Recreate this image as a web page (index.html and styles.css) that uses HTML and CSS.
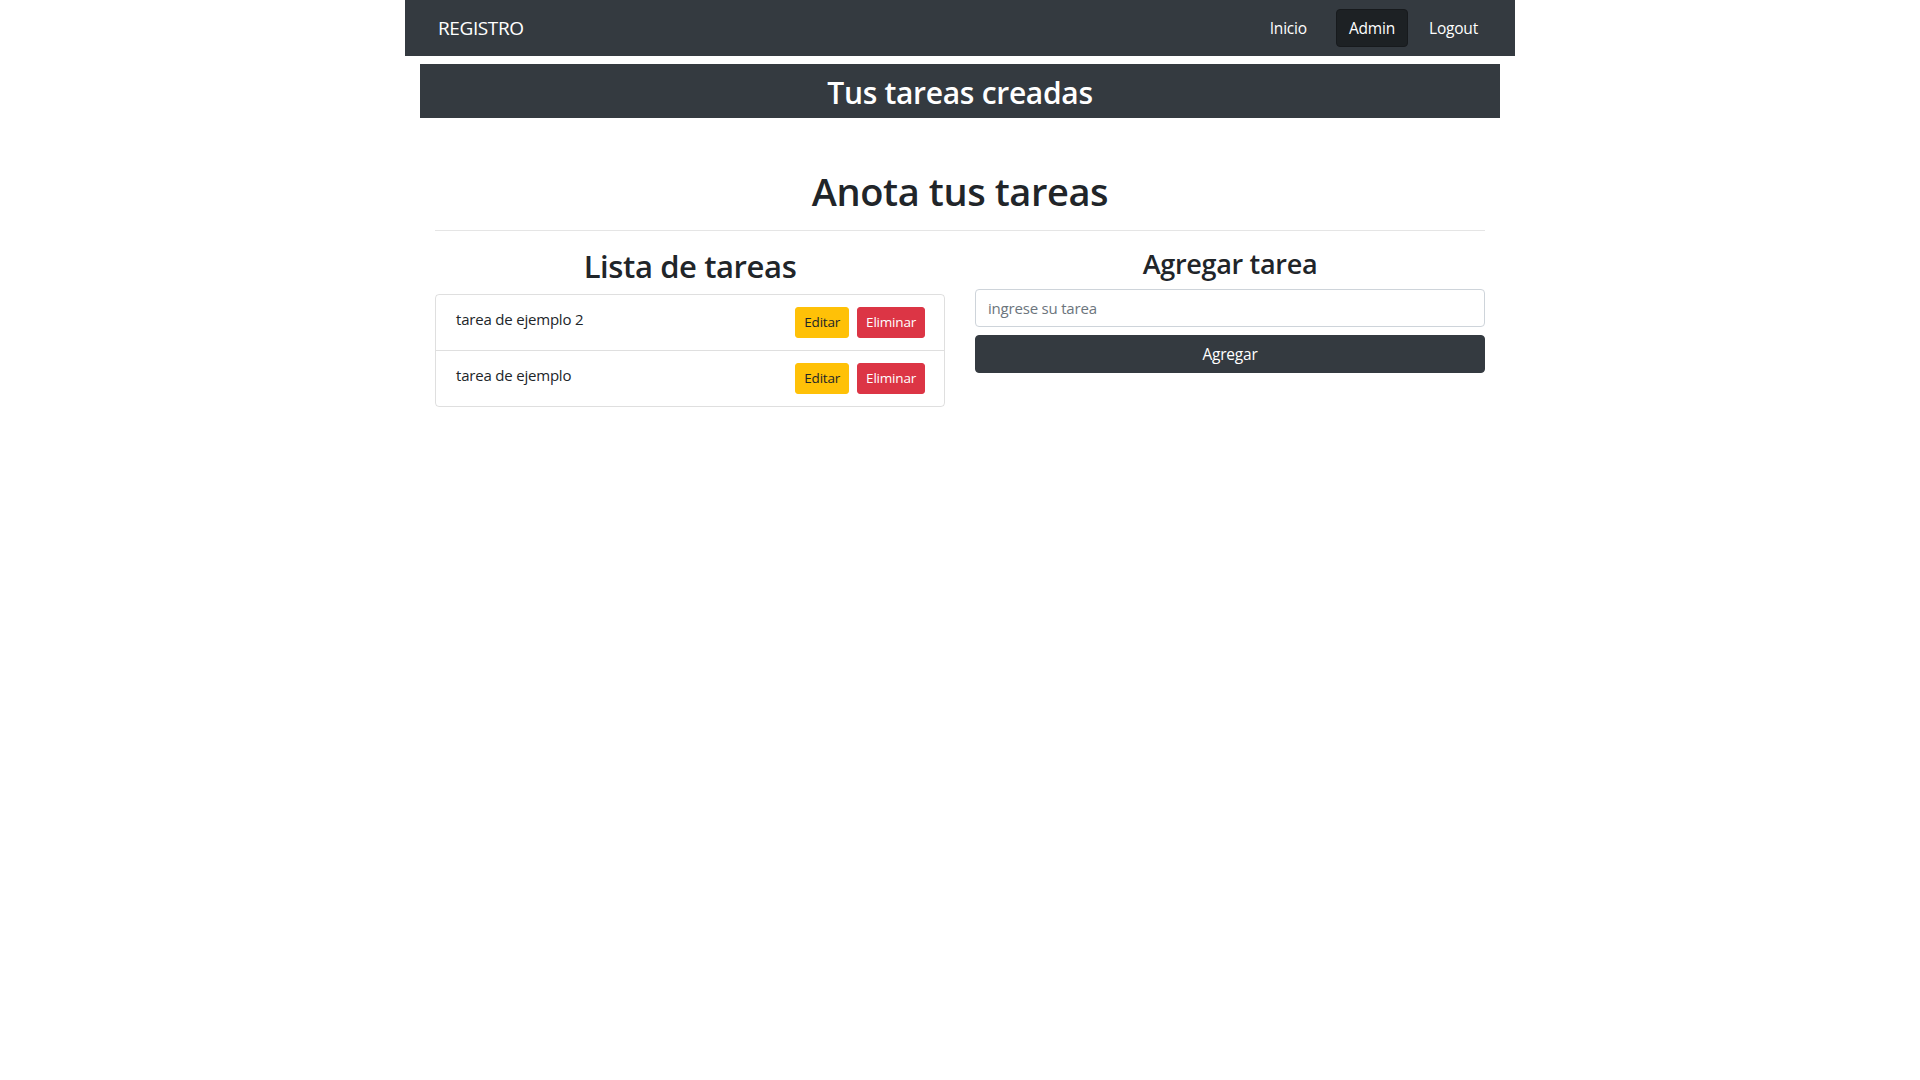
FILE: index.html
```html
<!DOCTYPE html>
<html lang="es">
<head>
<meta charset="utf-8">
<title>Tareas</title>
<link rel="stylesheet" href="styles.css">
</head>
<body>
<div class="page">
  <nav class="navbar">
    <a class="brand" href="#">REGISTRO</a>
    <div class="nav-links">
      <a class="nav-btn nav-inicio" href="#">Inicio</a>
      <a class="nav-btn nav-admin active" href="#">Admin</a>
      <a class="nav-btn nav-logout" href="#">Logout</a>
    </div>
  </nav>
  <div class="inner">
    <div class="banner"><h2 class="banner-title">Tus tareas creadas</h2></div>
    <div class="content">
      <h1 class="main-title">Anota tus tareas</h1>
      <hr class="divider">
      <div class="row">
        <div class="col">
          <h2 class="col-title-lg">Lista de tareas</h2>
          <ul class="list">
            <li class="list-item">
              <span class="task">tarea de ejemplo 2</span>
              <div class="actions">
                <button class="btn-sm btn-warning">Editar</button>
                <button class="btn-sm btn-danger">Eliminar</button>
              </div>
            </li>
            <li class="list-item">
              <span class="task">tarea de ejemplo</span>
              <div class="actions">
                <button class="btn-sm btn-warning">Editar</button>
                <button class="btn-sm btn-danger">Eliminar</button>
              </div>
            </li>
          </ul>
        </div>
        <div class="col">
          <h3 class="col-title-md">Agregar tarea</h3>
          <form class="form">
            <input class="input" type="text" placeholder="ingrese su tarea">
            <button class="btn-block" type="button">Agregar</button>
          </form>
        </div>
      </div>
    </div>
  </div>
</div>
</body>
</html>
```
FILE: styles.css
```css
* { box-sizing: border-box; }
html, body { margin: 0; padding: 0; background: #fff; }
body {
  font-family: "Open Sans", "Noto Sans", sans-serif;
  font-size: 16px;
  line-height: 1.5;
  color: #212529;
}
.page {
  width: 1110px;
  margin: 0 auto;
}
.navbar {
  height: 56px;
  background: #343a40;
  display: flex;
  align-items: center;
  padding: 0 24px 0 33px;
}
.brand {
  color: #fff;
  text-decoration: none;
  font-size: 19px;
  line-height: 30px;
  letter-spacing: -0.4px;
}
.nav-links {
  margin-left: auto;
  display: flex;
  align-items: center;
}
.nav-btn {
  display: block;
  height: 38px;
  line-height: 36px;
  padding: 0 12px;
  border: 1px solid transparent;
  border-radius: 4px;
  color: #fff;
  text-decoration: none;
  font-size: 15.5px;
  letter-spacing: -0.2px;
}
.nav-inicio { margin-right: 16px; }
.nav-admin { margin-right: 8px; }
.nav-btn.active {
  background: #1d2124;
  border-color: #171a1d;
}
.inner {
  padding: 8px 15px 0;
}
.banner {
  background: #343a40;
  color: #fff;
  text-align: center;
  padding: 10px 8px 6px;
}
.banner-title {
  margin: 0;
  font-size: 30px;
  font-weight: 600;
  line-height: 38px;
  letter-spacing: -0.3px;
}
.content {
  padding: 0 15px;
}
.main-title {
  margin: 49px 0 0;
  text-align: center;
  font-size: 38px;
  font-weight: 600;
  line-height: 48px;
  letter-spacing: -0.4px;
}
.divider {
  margin: 15px 0 16px;
  border: 0;
  border-top: 1px solid rgba(0,0,0,0.1);
  height: 0;
}
.row {
  display: flex;
  gap: 30px;
}
.col {
  flex: 1 1 0;
  min-width: 0;
}
.col-title-lg {
  margin: 0 0 9px;
  text-align: center;
  font-size: 31px;
  font-weight: 600;
  line-height: 38px;
  letter-spacing: -0.4px;
}
.col-title-md {
  margin: 0 0 8px;
  text-align: center;
  font-size: 27px;
  font-weight: 600;
  line-height: 34px;
  letter-spacing: -0.3px;
}
.list {
  list-style: none;
  margin: 0;
  padding: 0;
  border: 1px solid rgba(0,0,0,0.125);
  border-radius: 4px;
}
.list-item {
  display: flex;
  justify-content: space-between;
  padding: 12px 19px 12px 20px;
  font-size: 15px;
}
.list-item + .list-item {
  border-top: 1px solid rgba(0,0,0,0.125);
}
.task {
  line-height: 24px;
  letter-spacing: -0.2px;
}
.actions {
  display: flex;
  gap: 8px;
}
.btn-sm {
  height: 31px;
  padding: 0 8px;
  border: 1px solid transparent;
  border-radius: 3px;
  font-family: inherit;
  font-size: 13.5px;
  line-height: 29px;
  letter-spacing: -0.2px;
}
.btn-warning {
  background: #ffc107;
  border-color: #ffc107;
  color: #212529;
}
.btn-danger {
  background: #dc3545;
  border-color: #dc3545;
  color: #fff;
}
.form {
  display: flex;
  flex-direction: column;
  gap: 8px;
}
.input {
  display: block;
  width: 100%;
  height: 38px;
  padding: 6px 12px;
  border: 1px solid #ced4da;
  border-radius: 4px;
  font-family: inherit;
  font-size: 15px;
  color: #495057;
}
.input::placeholder {
  color: #6c757d;
  letter-spacing: -0.2px;
}
.btn-block {
  display: block;
  width: 100%;
  height: 38px;
  border: 1px solid #343a40;
  border-radius: 4px;
  background: #343a40;
  color: #fff;
  font-family: inherit;
  font-size: 15.5px;
  letter-spacing: -0.2px;
}
```
